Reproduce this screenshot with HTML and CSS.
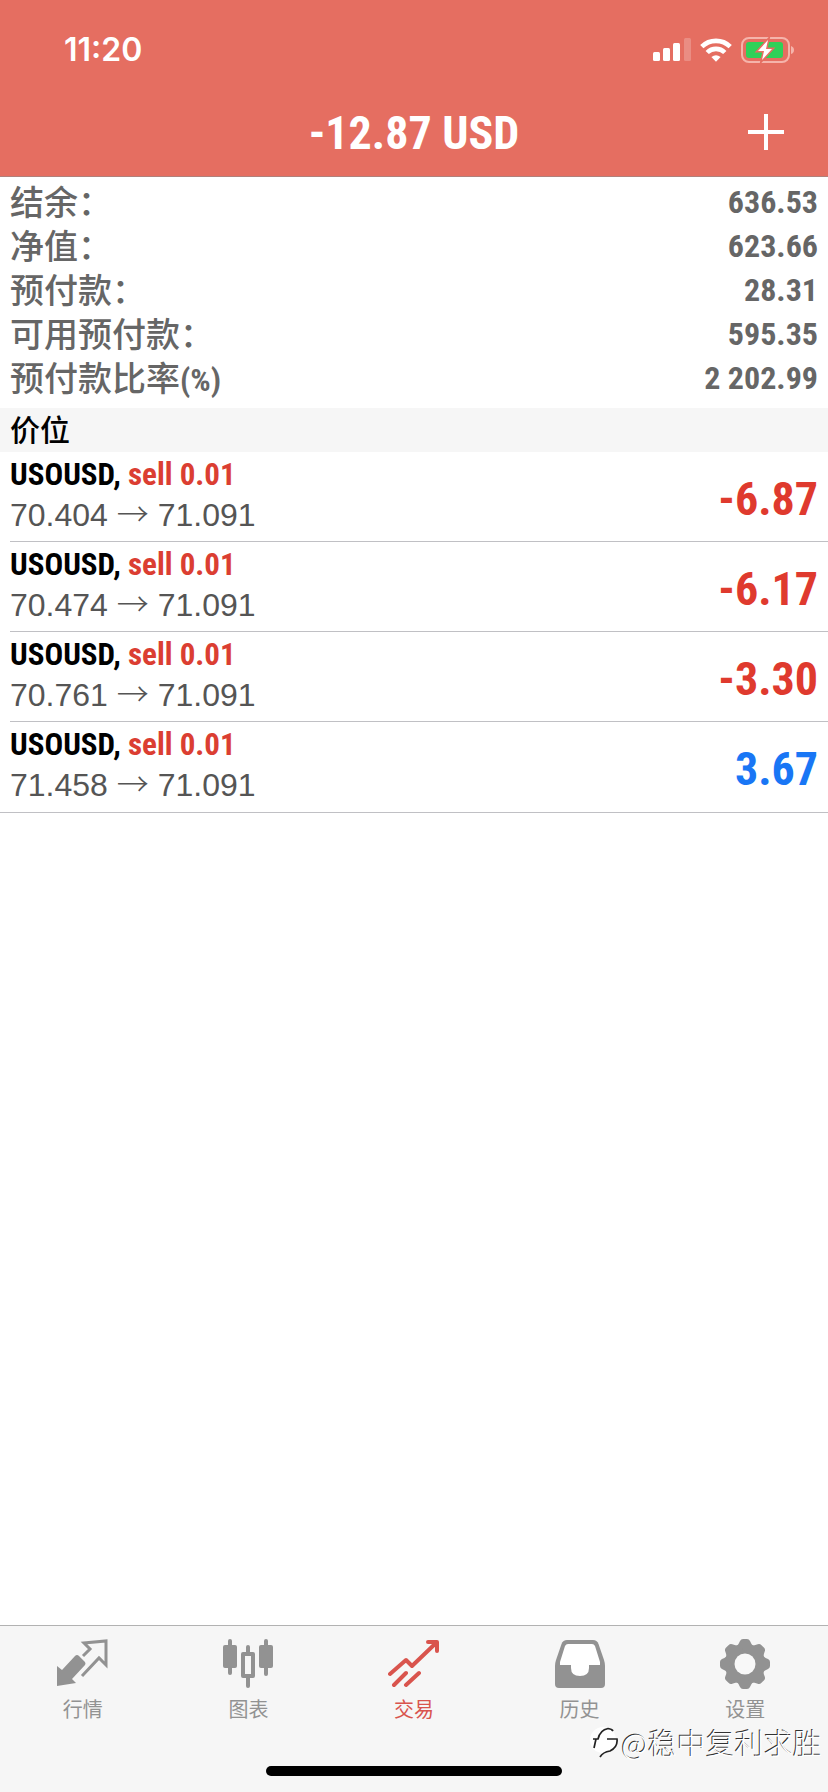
FILE: index.html
```html
<!DOCTYPE html>
<html lang="zh-CN">
<head>
<meta charset="utf-8">
<meta name="viewport" content="width=device-width, initial-scale=1">
<title>交易</title>
<link rel="stylesheet" href="styles.css">
</head>
<body>
<div class="app">
  <header class="header">
    <div class="status">
      <span class="time">11:20</span>
      <div class="indicators">
        <svg class="signal" width="38" height="24" viewBox="0 0 38 24" fill="#fff" aria-hidden="true">
          <rect x="0" y="14" width="7" height="9" rx="1.5"/><rect x="10" y="10" width="7" height="13" rx="1.5"/><rect x="20" y="5" width="7" height="18" rx="1.5"/><rect x="31" y="0" width="7" height="23" rx="1.5" opacity=".22"/>
        </svg>
        <svg class="wifi" width="32" height="24" viewBox="0 0 32 24" fill="none" stroke="#fff" stroke-width="4.6" aria-hidden="true">
          <path d="M1.8 8.7A20.2 20.2 0 0 1 30.2 8.7"/><path d="M7.2 14.5A12.4 12.4 0 0 1 24.8 14.5"/><path d="M11.4 19Q16 15.300 20.600 19L16 23.700Z" fill="#fff" stroke="none"/>
        </svg>
        <svg class="battery" width="54" height="26" viewBox="0 0 54 26" aria-hidden="true">
          <rect x="1" y="1" width="47" height="24" rx="7" fill="none" stroke="#f5b4ab" stroke-width="2"/>
          <rect x="5" y="5" width="37" height="16" rx="3" fill="#2fd158"/>
          <path d="M50 9Q53 10 53 13T50 17Z" fill="#f5b4ab"/>
          <path d="M27 3L17 14H23L21 23L31 12H25Z" fill="#fff" stroke="#e56e61" stroke-width="3"/>
          <path d="M27 3L17 14H23L21 23L31 12H25Z" fill="#fff"/>
        </svg>
      </div>
    </div>
    <div class="titlebar">
      <h1 class="title">-12.87 USD</h1>
      <button class="add" type="button" aria-label="新订单"><svg width="36" height="36" viewBox="0 0 36 36" stroke="#fff" stroke-width="4" aria-hidden="true"><path d="M18 0V36M0 18H36"/></svg></button>
    </div>
  </header>
  <main class="main">
    <dl class="account">
      <div class="line"><dt>结余：</dt><dd>636.53</dd></div>
      <div class="line"><dt>净值：</dt><dd>623.66</dd></div>
      <div class="line"><dt>预付款：</dt><dd>28.31</dd></div>
      <div class="line"><dt>可用预付款：</dt><dd>595.35</dd></div>
      <div class="line"><dt>预付款比率<span class="unit">(%)</span></dt><dd>2 202.99</dd></div>
    </dl>
    <h2 class="section">价位</h2>
    <ul class="positions">
      <li class="position"><div class="info"><p class="deal">USOUSD, <span class="side">sell 0.01</span></p><p class="prices">70.404 <span class="arrow">→</span> 71.091</p></div><span class="profit loss">-6.87</span></li>
      <li class="position"><div class="info"><p class="deal">USOUSD, <span class="side">sell 0.01</span></p><p class="prices">70.474 <span class="arrow">→</span> 71.091</p></div><span class="profit loss">-6.17</span></li>
      <li class="position"><div class="info"><p class="deal">USOUSD, <span class="side">sell 0.01</span></p><p class="prices">70.761 <span class="arrow">→</span> 71.091</p></div><span class="profit loss">-3.30</span></li>
      <li class="position"><div class="info"><p class="deal">USOUSD, <span class="side">sell 0.01</span></p><p class="prices">71.458 <span class="arrow">→</span> 71.091</p></div><span class="profit gain">3.67</span></li>
    </ul>
  </main>
  <footer class="footer">
    <nav class="tabs">
      <a class="tab" href="#quotes"><svg width="52" height="52" viewBox="0 0 52 52" aria-hidden="true"><path d="M0 28L5 32L18 18Q20 16 22 18L28 24Q29 26 28 27L15 41L19 45L0 48Z" fill="#929292"/><path d="M26 18L33 11L27 5L49 3V27L42 20L25 38" fill="none" stroke="#929292" stroke-width="3"/></svg>行情</a>
      <a class="tab" href="#chart"><svg width="52" height="52" viewBox="0 0 52 52" fill="#929292" aria-hidden="true"><rect x="6" y="1" width="4" height="36" rx="2"/><rect x="1" y="7" width="14" height="23" rx="2"/><rect x="42" y="1" width="4" height="37" rx="2"/><rect x="37" y="7" width="14" height="23" rx="2"/><rect x="24" y="7" width="4" height="43" rx="2"/><rect x="21" y="16" width="10" height="22" fill="#f6f6f6" stroke="#929292" stroke-width="4" stroke-linejoin="round"/></svg>图表</a>
      <a class="tab active" href="#trade" aria-current="page"><svg width="52" height="52" viewBox="0 0 52 52" fill="none" stroke="#d9544d" stroke-width="4" stroke-linecap="round" stroke-linejoin="round" aria-hidden="true"><path d="M2 36L18 22L24 28L48 5M40 4H49V13M6 47L18 35M18 47L31 35"/></svg>交易</a>
      <a class="tab" href="#history"><svg width="52" height="52" viewBox="0 0 52 52" aria-hidden="true"><path fill="#929292" d="M13 2H39Q43 2 44.500 6L50 22Q51 25 51 28V46Q51 50 47 50H5Q1 50 1 46V28Q1 25 2 22L7.500 6Q9 2 13 2Z"/><path fill="#fff" d="M14 6Q12 6 11 8L6 24V27H17V30Q17 38 26 38T35 30V27H46V24L41 8Q40 6 38 6Z"/></svg>历史</a>
      <a class="tab" href="#settings"><svg width="52" height="52" viewBox="0 0 52 52" aria-hidden="true"><g fill="#929292"><circle cx="26" cy="26" r="20"/><g id="teeth"><path id="tooth" d="M17 9Q20 6 21 3Q22 1 24 1H28Q30 1 31 3Q32 6 35 9V43Q32 46 31 49Q30 51 28 51H24Q22 51 21 49Q20 46 17 43Z"/><use href="#tooth" transform="rotate(90 26 26)"/></g><use href="#teeth" transform="rotate(45 26 26)"/></g><circle cx="26" cy="26" r="10.500" fill="#f8f8f8"/></svg>设置</a>
    </nav>
    <div class="watermark"><svg width="28" height="32" viewBox="0 0 28 32" aria-hidden="true"><circle cx="13" cy="14" r="13" fill="#fff"/><path d="M4 22L6 13M3 13H8Q10 4 18 2.500Q22 3 23 5M17 13H27Q28 21 20 25Q13 26 10 31" fill="none" stroke="#222" stroke-width="1.700"/></svg><span>@稳中复利求胜</span></div>
    <div class="home"></div>
  </footer>
</div>
</body>
</html>
```
FILE: styles.css
```css
* { box-sizing: border-box; margin: 0; padding: 0; }
:root { --condensed: "Roboto Condensed", "Liberation Sans", sans-serif; }
body { background: #fff; color: #000; font-family: "Liberation Sans", "Noto Sans CJK SC", sans-serif; }
.app { min-height: 100vh; display: flex; flex-direction: column; }
.header { background: #e56e61; color: #fff; border-bottom: 1px solid #b0807b; }
.status { height: 88px; padding: 12px 33px 0 64px; display: flex; align-items: center; justify-content: space-between; }
.time { font: 600 32px/36px Inter, sans-serif; }
.indicators { display: flex; align-items: center; gap: 9px; }
.titlebar { height: 88px; padding: 0 44px; display: grid; grid-template-columns: 36px 1fr 36px; align-items: center; }
.title { grid-column: 2; padding-top: 2px; text-align: center; font: bold 46px/56px var(--condensed); }
.add { width: 36px; height: 36px; background: none; border: 0; color: inherit; }
.add svg { display: block; }
.main { flex: 1; }
.account { padding: 3px 10px 8px; color: #666; }
.line { height: 44px; display: flex; justify-content: space-between; }
.line dt { font: 500 34px/42px "Noto Sans CJK SC", sans-serif; }
.line dd { font: bold 32px/44px var(--condensed); }
.unit { font-family: var(--condensed); font-weight: bold; font-size: 32px; }
.section { padding: 0 10px 4px; background: #f6f6f6; font: 500 30px/40px "Noto Sans CJK SC", sans-serif; }
.positions { list-style: none; border-bottom: 1px solid #c0c0c4; }
.position { height: 90px; margin-left: 10px; padding-right: 10px; display: flex; justify-content: space-between; align-items: center; border-bottom: 1px solid #c0c0c4; }
.position:last-child { border-bottom: 0; }
.info { padding-bottom: 4px; }
.deal { font: bold 31px/40px var(--condensed); }
.side { color: #db3e32; }
.prices { font-size: 32px; line-height: 40px; color: #555; }
.arrow { font-family: "Noto Sans CJK SC", sans-serif; font-weight: 300; line-height: 1; }
.profit { padding-top: 4px; font: bold 46px/56px var(--condensed); }
.loss { color: #df3a2e; }
.gain { color: #1976f5; }
.footer { position: relative; background: #f6f6f6; border-top: 1px solid #b2b2b2; padding-bottom: 16px; }
.tabs { display: flex; padding-top: 12px; }
.tab { flex: 1; display: flex; flex-direction: column; align-items: center; gap: 3px; color: #929292; text-decoration: none; font: 400 20px/32px "Noto Sans CJK SC", sans-serif; }
.active { color: #d9544d; }
.home { width: 296px; height: 10px; margin: 41px auto 0; border-radius: 5px; background: #000; }
.watermark { position: absolute; right: 6px; bottom: 30px; display: flex; align-items: center; gap: 4px; color: #fff; font: 300 29px/40px "Noto Sans CJK SC", sans-serif; text-shadow: -1px -1px 0 #333; }
```
